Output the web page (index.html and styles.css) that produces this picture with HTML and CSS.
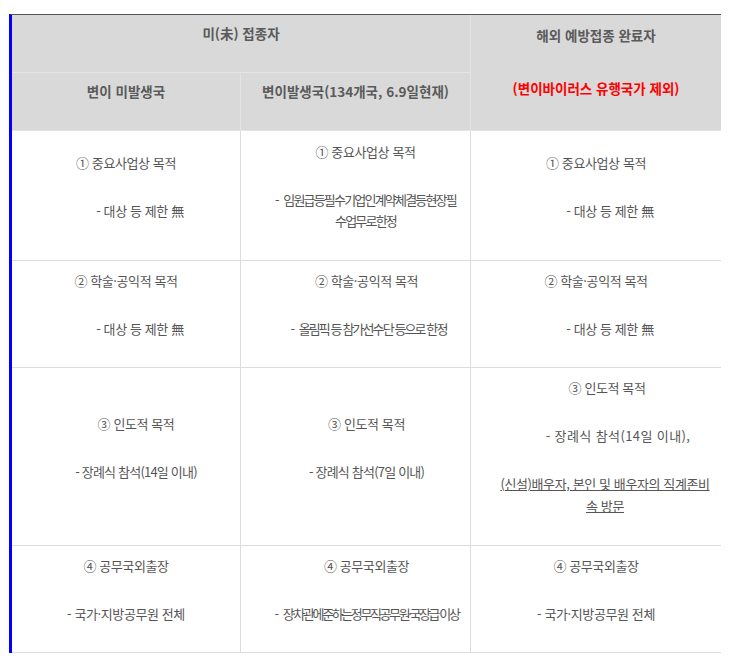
FILE: index.html
```html
<!DOCTYPE html>
<html lang="ko">
<head>
<meta charset="utf-8">
<title>접종자 격리면제 대상</title>
<link rel="stylesheet" href="styles.css">
</head>
<body>
<div class="wrap">
<table class="tbl">
  <colgroup>
    <col class="w1"><col class="w2"><col class="w3">
  </colgroup>
  <thead>
    <tr>
      <th class="hd" colspan="2">미(未) 접종자</th>
      <th class="hd hd-last" rowspan="2">
        <p class="hd-title">해외 예방접종 완료자</p>
        <p class="red">(변이바이러스 유행국가 제외)</p>
      </th>
    </tr>
    <tr>
      <th class="hd">변이 미발생국</th>
      <th class="hd">변이발생국(134개국, 6.9일현재)</th>
    </tr>
  </thead>
  <tbody>
    <tr>
      <td class="c"><p class="t">① 중요사업상 목적</p><p class="d s14">- 대상 등 제한 無</p></td>
      <td class="c c2 top"><p class="t">① 중요사업상 목적</p><p class="d sq"><span class="ns">- </span>임원급등필수기업인계약체결등현장필수업무로한정</p></td>
      <td class="c last"><p class="t">① 중요사업상 목적</p><p class="d s14">- 대상 등 제한 無</p></td>
    </tr>
    <tr>
      <td class="c"><p class="t">② 학술·공익적 목적</p><p class="d s14">- 대상 등 제한 無</p></td>
      <td class="c c2b"><p class="t">② 학술·공익적 목적</p><p class="d sq2 s3"><span class="ns">- </span>올림픽 등 참가선수단 등으로 한정</p></td>
      <td class="c last"><p class="t">② 학술·공익적 목적</p><p class="d s14">- 대상 등 제한 無</p></td>
    </tr>
    <tr>
      <td class="c c1s"><p class="t">③ 인도적 목적</p><p class="d tight">- 장례식 참석(14일 이내)</p></td>
      <td class="c c2b"><p class="t">③ 인도적 목적</p><p class="d tight">- 장례식 참석(7일 이내)</p></td>
      <td class="c last top"><p class="t s11">③ 인도적 목적</p><p class="d wide s23">- 장례식 참석(14일 이내),</p><p class="d u-wrap"><span class="u">(신설)배우자, 본인 및 배우자의 직계존비속 방문</span></p></td>
    </tr>
    <tr>
      <td class="c"><p class="t">④ 공무국외출장</p><p class="d">- 국가·지방공무원 전체</p></td>
      <td class="c c2c"><p class="t">④ 공무국외출장</p><p class="d sq3"><span class="ns">- </span>장·차관에준하는정무직공무원·국장급 이상</p></td>
      <td class="c last"><p class="t">④ 공무국외출장</p><p class="d">- 국가·지방공무원 전체</p></td>
    </tr>
  </tbody>
</table>
</div>
</body>
</html>
```

FILE: styles.css
```css
html, body {
  margin: 0;
  padding: 0;
  background: #ffffff;
}

.wrap {
  padding: 14px 0 0 9px;
}

.tbl {
  border-collapse: separate;
  border-spacing: 0;
  table-layout: fixed;
  width: 712px;
  border-left: 3px solid #0000ff;
  border-top: 1px solid #55585c;
  font-family: "Noto Sans CJK KR", "Noto Sans", sans-serif;
  color: #555555;
}

.w1 { width: 229px; }
.w2 { width: 230px; }
.w3 { width: 250px; }

.tbl p {
  margin: 0;
}

.hd {
  background: #d9d9d9;
  font-size: 13.5px;
  font-weight: bold;
  line-height: 21px;
  text-align: center;
  vertical-align: top;
  padding: 8px 10px 28px;
  border-right: 1px solid #e4e4e8;
  border-bottom: 1px solid #e4e4e8;
  color: #5a5a5a;
}

.hd-last {
  border-right: none;
  padding-top: 10px;
}

.hd-title {
  margin-bottom: 32px !important;
}

.red {
  color: #ff0000;
}

.c {
  font-size: 13px;
  line-height: 21px;
  letter-spacing: -0.4px;
  text-align: center;
  vertical-align: middle;
  padding: 9px 10px 28px;
  border-right: 1px solid #dcdde3;
  border-bottom: 1px solid #dcdde3;
}

.c.top {
  vertical-align: top;
}

.c.last {
  border-right: none;
}

.t {
  margin-bottom: 27px !important;
}

.d + .d {
  margin-top: 27px !important;
}

.c2 {
  padding: 10px 10px 29px 30px;
}

.c2b {
  padding-left: 32px;
}

.c2c {
  padding-left: 28px;
  padding-right: 6px;
}

.c1s {
  padding-left: 30px;
}

.s14 { padding-left: 28px; }
.s11 { padding-left: 22px; }
.s23 { padding-left: 44px; }
.s3 { padding-left: 4px; }

.sq {
  letter-spacing: -1.8px;
}

.sq2 {
  letter-spacing: -1.9px;
}

.sq3 {
  letter-spacing: -2.4px;
}

.ns {
  letter-spacing: 0;
}

.tight {
  letter-spacing: -0.8px;
}

.wide {
  letter-spacing: 0.4px;
}

.u-wrap {
  padding-left: 18px;
  line-height: 22px;
}

.u {
  text-decoration: underline;
}
```
